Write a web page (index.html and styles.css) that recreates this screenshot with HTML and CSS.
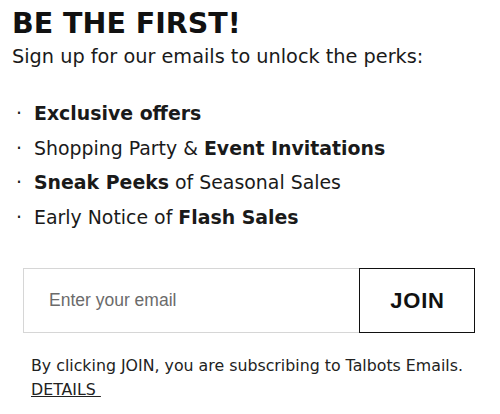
FILE: index.html
```html
<!DOCTYPE html>
<html>
<head>
<meta charset="utf-8">
<link rel="stylesheet" href="styles.css">
</head>
<body>
<div class="signup">
  <h1 class="title">BE THE FIRST!</h1>
  <p class="lead">Sign up for our emails to unlock the perks:</p>
  <ul class="perks">
    <li><b>Exclusive offers</b></li>
    <li>Shopping Party &amp; <b>Event Invitations</b></li>
    <li><b>Sneak Peeks</b> of Seasonal Sales</li>
    <li>Early Notice of <b>Flash Sales</b></li>
  </ul>
  <form class="form">
    <input class="email" type="text" placeholder="Enter your email">
    <button class="join" type="button">JOIN</button>
  </form>
  <p class="legal">By clicking JOIN, you are subscribing to Talbots Emails.<br><a class="details" href="#">DETAILS&nbsp;</a></p>
</div>
</body>
</html>
```
FILE: styles.css
```css
html, body { margin: 0; padding: 0; background: #fff; }
body { font-family: "DejaVu Sans", sans-serif; color: #1a1a1a; }
.signup { padding: 8px 12px 0 12px; }
.title { margin: 0; font-size: 28.5px; font-weight: 700; line-height: 32px; color: #111; }
.lead { margin: 4px 0 0 0; font-size: 19.3px; line-height: 26px; }
.perks { list-style: none; margin: 26px 0 0 0; padding: 0; }
.perks li { font-size: 18.9px; line-height: 34.5px; padding-left: 22px; position: relative; }
.perks li::before { content: "·"; position: absolute; left: 4px; top: 0; font-weight: 400; }
.perks b { font-weight: 700; }
.form { display: flex; margin: 34px 0 0 11px; width: 452px; height: 65px; }
.email { flex: 1; min-width: 0; border: 1px solid #d6d6d6; border-right: none; padding: 0 0 0 25px; font-family: "Liberation Sans", Arial, sans-serif; font-size: 17.5px; color: #333; outline: none; }
.email::placeholder { color: #6b6b6b; }
.join { width: 116px; border: 1.5px solid #111; background: #fff; font-family: "Liberation Sans", Arial, sans-serif; font-weight: 700; font-size: 22px; letter-spacing: 0.8px; color: #111; padding: 0 0 0 1px; }
.legal { margin: 21px 0 0 19px; font-size: 15.8px; line-height: 24px; color: #222; }
.details { color: #222; text-decoration: underline; }
```
